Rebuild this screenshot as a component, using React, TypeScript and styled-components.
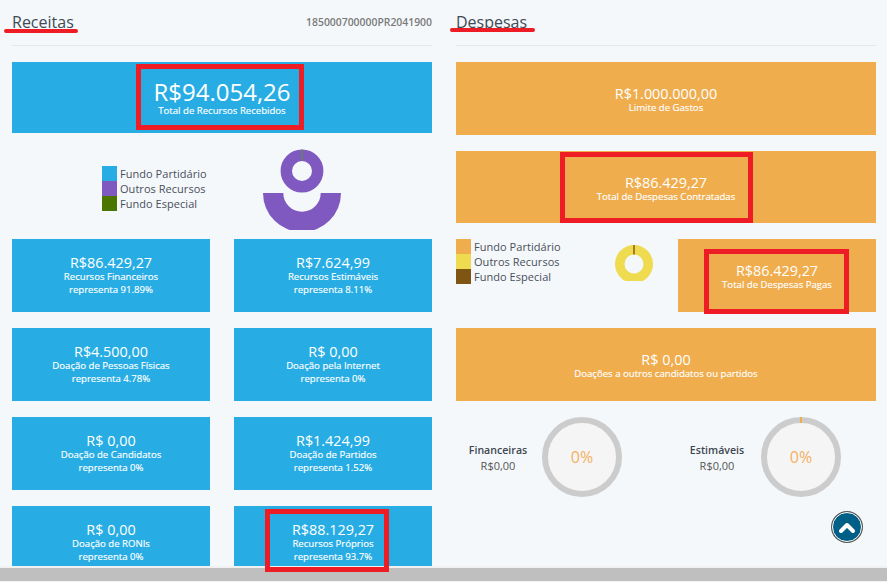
import React from "react";
import styled, { createGlobalStyle } from "styled-components";

const Global = createGlobalStyle`
  html, body { margin: 0; padding: 0; background: #f4f8fb; }
  body { font-family: "Open Sans", "Liberation Sans", sans-serif; overflow: hidden; }
`;

const BLUE = "#27ade4";
const ORANGE = "#efad4e";

const Page = styled.div`
  position: relative;
  width: 887px;
  height: 582px;
  overflow: hidden;
  display: flex;
  flex-direction: column;
  background: #f4f8fb;
`;
const Content = styled.div`
  flex: 1;
  min-height: 0;
  overflow: hidden;
  display: grid;
  grid-template-columns: 420px 420px;
  column-gap: 24px;
  padding: 0 11px 0 12px;
  align-items: start;
`;
const Column = styled.section`
  display: flex;
  flex-direction: column;
`;
const Header = styled.header`
  height: 46px;
  box-sizing: border-box;
  border-bottom: 1px solid #e4e8ec;
  display: flex;
  justify-content: space-between;
  align-items: flex-start;
  padding-top: 11px;
  margin-bottom: 16px;
`;
const Title = styled.h2`
  margin: 0;
  font-size: 16px;
  line-height: 22px;
  font-weight: 400;
  color: #3f4a55;
`;
const Code = styled.span`
  font-size: 10.4px;
  line-height: 22px;
  font-weight: 600;
  color: #7a7a7a;
`;
const Tile = styled.div<{ $color: string; $h?: number; $pt?: number }>`
  background: ${(p) => p.$color};
  height: ${(p) => p.$h ?? 73}px;
  box-sizing: border-box;
  padding-top: ${(p) => p.$pt ?? 0}px;
  display: flex;
  flex-direction: column;
  justify-content: center;
  align-items: center;
  color: #fff;
  text-align: center;
  flex-shrink: 0;
`;
const BigValue = styled.div`
  font-size: 24px;
  line-height: 25px;
`;
const Value = styled.div`
  font-size: 14.4px;
  line-height: 15px;
`;
const Label = styled.div`
  font-size: 9.6px;
  line-height: 13px;
  font-weight: 500;
  -webkit-text-stroke: 0.15px #fff;
`;
const TileGrid = styled.div`
  display: grid;
  grid-template-columns: 198px 198px;
  column-gap: 24px;
  row-gap: 16px;
`;
const ChartRow = styled.div`
  height: 106px;
  display: flex;
  padding-left: 90px;
`;
const Legend = styled.ul`
  list-style: none;
  margin: 0;
  padding: 0;
  display: flex;
  flex-direction: column;
`;
const LegendRow = styled.li`
  display: flex;
  align-items: center;
  height: 15px;
  gap: 3px;
  font-size: 11px;
  letter-spacing: 0.04px;
  color: #4a4f5a;
`;
const Swatch = styled.i<{ $color: string }>`
  width: 15px;
  height: 15px;
  background: ${(p) => p.$color};
  display: block;
`;
const LeftLegend = styled(Legend)`
  margin-top: 33px;
  width: 160px;
`;
const LeftChart = styled.svg`
  display: block;
  margin-top: 16px;
`;
const Stack = styled.div`
  display: flex;
  flex-direction: column;
  gap: 16px;
`;
const PaidRow = styled.div`
  display: flex;
  align-items: flex-start;
`;
const PaidLegend = styled(Legend)`
  width: 159px;
`;
const PaidDonut = styled.svg`
  display: block;
  margin: 6px 25px 0 0;
`;
const PaidTile = styled(Tile)`
  width: 198px;
`;
const GaugeRow = styled.div`
  display: grid;
  grid-template-columns: 219px 201px;
`;
const GaugeItem = styled.div`
  display: flex;
  align-items: center;
  gap: 2px;
`;
const GaugeText = styled.div`
  width: 84px;
  text-align: center;
  margin-top: 2px;
`;
const GaugeName = styled.div`
  font-size: 10.6px;
  line-height: 15px;
  font-weight: 600;
  color: #3f4650;
`;
const GaugeAmount = styled.div`
  font-size: 11px;
  line-height: 15px;
  color: #555;
`;
const Ring = styled.div`
  position: relative;
  width: 80px;
  height: 80px;
  box-sizing: border-box;
  border: 6px solid #cccccc;
  border-radius: 50%;
  background: #f5f5f5;
  display: flex;
  align-items: center;
  justify-content: center;
  font-size: 16px;
  color: #f5b063;
`;
const Tick = styled.span`
  position: absolute;
  top: -6px;
  left: 50%;
  width: 2px;
  height: 6px;
  margin-left: -1px;
  background: ${ORANGE};
`;
const Scrollbar = styled.div`
  height: 16px;
  flex-shrink: 0;
  box-sizing: border-box;
  background: #f1f1f1;
  padding: 2px 0 1px;
`;
const Thumb = styled.div`
  height: 100%;
  background: #bfbfbf;
`;
const Frame = styled.div<{ $x: number; $y: number; $w: number; $h: number }>`
  position: absolute;
  left: ${(p) => p.$x}px;
  top: ${(p) => p.$y}px;
  width: ${(p) => p.$w}px;
  height: ${(p) => p.$h}px;
  box-sizing: border-box;
  border: 5px solid #ee1c25;
  pointer-events: none;
`;
const Underline = styled.div<{ $x: number; $y: number; $w: number }>`
  position: absolute;
  left: ${(p) => p.$x}px;
  top: ${(p) => p.$y}px;
  width: ${(p) => p.$w}px;
  height: 4px;
  border-radius: 2px;
  background: #ee1c25;
`;
const UpButton = styled.a`
  position: absolute;
  left: 832px;
  top: 512px;
  width: 30px;
  height: 30px;
  box-sizing: border-box;
  border-radius: 50%;
  background: #005f87;
  border: 1px solid #fff;
  box-shadow: 0 0 0 1px #555;
  display: flex;
  align-items: center;
  justify-content: center;
`;

const receitas: [string, string, string][] = [
  ["R$86.429,27", "Recursos Financeiros", "representa 91.89%"],
  ["R$7.624,99", "Recursos Estimáveis", "representa 8.11%"],
  ["R$4.500,00", "Doação de Pessoas Físicas", "representa 4.78%"],
  ["R$ 0,00", "Doação pela Internet", "representa 0%"],
  ["R$ 0,00", "Doação de Candidatos", "representa 0%"],
  ["R$1.424,99", "Doação de Partidos", "representa 1.52%"],
  ["R$ 0,00", "Doação de RONIs", "representa 0%"],
  ["R$88.129,27", "Recursos Próprios", "representa 93.7%"],
];

const LegendItems = ({ colors }: { colors: string[] }) => (
  <>
    {["Fundo Partidário", "Outros Recursos", "Fundo Especial"].map((t, i) => (
      <LegendRow key={t}>
        <Swatch $color={colors[i]} />
        {t}
      </LegendRow>
    ))}
  </>
);

export default function App() {
  return (
    <Page>
      <Global />
      <Content>
        <Column>
          <Header>
            <Title>Receitas</Title>
            <Code>185000700000PR2041900</Code>
          </Header>
          <Tile $color={BLUE} $h={71} $pt={1}>
            <BigValue>R$94.054,26</BigValue>
            <Label>Total de Recursos Recebidos</Label>
          </Tile>
          <ChartRow>
            <LeftLegend>
              <LegendItems colors={[BLUE, "#7f58c0", "#4a7600"]} />
            </LeftLegend>
            <LeftChart width="80" height="81" viewBox="0 0 80 81">
              <circle cx="40" cy="22" r="15.7" fill="none" stroke="#7f58c0" strokeWidth="11.4" />
              <rect x="39.4" y="0.5" width="1.4" height="11" fill="#5f8a50" />
              <path d="M1 44 A39 39 0 0 0 79 44 L58.7 44 A18.7 18.7 0 0 1 21.3 44 Z" fill="#7f58c0" />
            </LeftChart>
          </ChartRow>
          <TileGrid>
            {receitas.map(([v, l, r]) => (
              <Tile key={l} $color={BLUE}>
                <Value>{v}</Value>
                <Label>{l}</Label>
                <Label>{r}</Label>
              </Tile>
            ))}
          </TileGrid>
        </Column>
        <Column>
          <Header>
            <Title>Despesas</Title>
          </Header>
          <Stack>
            <Tile $color={ORANGE} $pt={2}>
              <Value>R$1.000.000,00</Value>
              <Label>Limite de Gastos</Label>
            </Tile>
            <Tile $color={ORANGE} $h={72} $pt={3}>
              <Value>R$86.429,27</Value>
              <Label>Total de Despesas Contratadas</Label>
            </Tile>
            <PaidRow>
              <PaidLegend>
                <LegendItems colors={[ORANGE, "#efdb4f", "#7f5514"]} />
              </PaidLegend>
              <PaidDonut width="38" height="36" viewBox="0 0 38 36">
                <circle cx="19" cy="19" r="14.25" fill="none" stroke="#efdb4f" strokeWidth="9.5" />
                <rect x="18" y="0" width="2" height="9.5" fill="#a87c20" />
              </PaidDonut>
              <PaidTile $color={ORANGE} $pt={2}>
                <Value>R$86.429,27</Value>
                <Label>Total de Despesas Pagas</Label>
              </PaidTile>
            </PaidRow>
            <Tile $color={ORANGE} $pt={3}>
              <Value>R$ 0,00</Value>
              <Label>Doações a outros candidatos ou partidos</Label>
            </Tile>
            <GaugeRow>
              <GaugeItem>
                <GaugeText>
                  <GaugeName>Financeiras</GaugeName>
                  <GaugeAmount>R$0,00</GaugeAmount>
                </GaugeText>
                <Ring>0%</Ring>
              </GaugeItem>
              <GaugeItem>
                <GaugeText>
                  <GaugeName>Estimáveis</GaugeName>
                  <GaugeAmount>R$0,00</GaugeAmount>
                </GaugeText>
                <Ring>
                  <Tick />
                  0%
                </Ring>
              </GaugeItem>
            </GaugeRow>
          </Stack>
        </Column>
      </Content>
      <Scrollbar>
        <Thumb />
      </Scrollbar>
      <Underline $x={4} $y={29} $w={74} />
      <Underline $x={450} $y={28} $w={85} />
      <Frame $x={136} $y={64} $w={168} $h={66} />
      <Frame $x={560} $y={152} $w={193} $h={71} />
      <Frame $x={704} $y={249} $w={145} $h={65} />
      <Frame $x={265} $y={509} $w={124} $h={63} />
      <UpButton>
        <svg width="20" height="14" viewBox="0 0 20 14">
          <path d="M4 11 L10 5 L16 11" fill="none" stroke="#fff" strokeWidth="4" strokeLinecap="round" strokeLinejoin="round" />
        </svg>
      </UpButton>
    </Page>
  );
}
